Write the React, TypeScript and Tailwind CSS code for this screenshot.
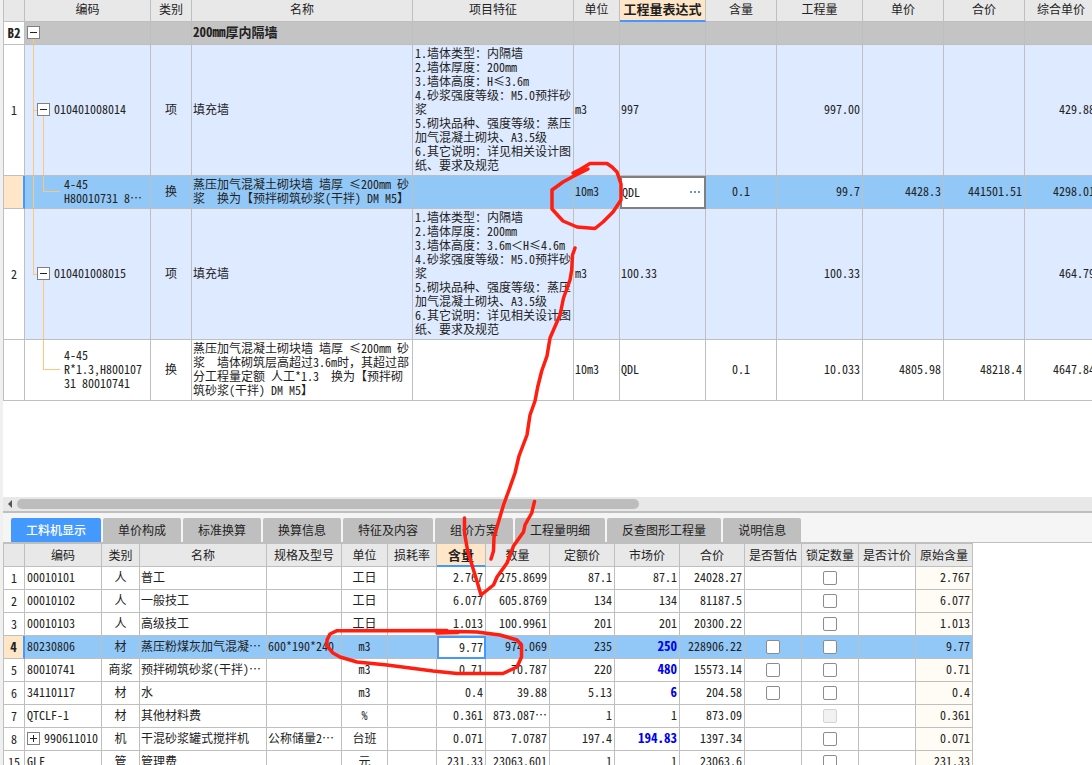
import type { ReactNode } from "react";

const line = "border-r border-b border-[#bfbfbf]";

function Wide({ text }: { text: string }) {
  return (
    <>
      {text.split(/([，＜…])/).map((part, i) =>
        i % 2 === 1 ? (
          <span key={i} lang="zh-CN" className="inline-block w-[12px] [font-feature-settings:normal]">
            {part === "…" ? "⋯" : part}
          </span>
        ) : (
          part
        ),
      )}
    </>
  );
}

function Toggle({ open, label }: { open: boolean; label: string }) {
  return (
    <button
      type="button"
      aria-label={label}
      aria-expanded={open}
      className="relative z-10 flex size-[13px] shrink-0 items-center justify-center border border-[#808080] bg-white"
    >
      <svg viewBox="0 0 7 7" className="size-[7px]" shapeRendering="crispEdges">
        <path d={open ? "M0 3h7v1H0z" : "M0 3h7v1H0zM3 0h1v7H3z"} fill="#222" />
      </svg>
    </button>
  );
}

type TopRow = {
  no: string;
  code: string;
  kind: string;
  name: string;
  spec: string;
  unit: string;
  expr: string;
  ratio: string;
  qty: string;
  price: string;
  total: string;
  composite: string;
  parent: boolean;
  trunk: "full" | "half" | "none";
  selected?: boolean;
};

const spec = (height: string) =>
  `1.墙体类型：内隔墙
2.墙体厚度：200mm
3.墙体高度：${height}
4.砂浆强度等级：M5.0预拌砂
浆
5.砌块品种、强度等级：蒸压
加气混凝土砌块、A3.5级
6.其它说明：详见相关设计图
纸、要求及规范`;

const topRows: TopRow[] = [
  {
    no: "1", code: "010401008014", kind: "项", name: "填充墙", spec: spec("H≤3.6m"), unit: "m3", expr: "997",
    ratio: "", qty: "997.00", price: "", total: "", composite: "429.88", parent: true, trunk: "full",
  },
  {
    no: "", code: "4-45\nH80010731 8…", kind: "换",
    name: "蒸压加气混凝土砌块墙 墙厚 ≤200mm 砂\n浆  换为【预拌砌筑砂浆(干拌) DM M5】",
    spec: "", unit: "10m3", expr: "QDL", ratio: "0.1", qty: "99.7", price: "4428.3", total: "441501.51",
    composite: "4298.01", parent: false, trunk: "full", selected: true,
  },
  {
    no: "2", code: "010401008015", kind: "项", name: "填充墙", spec: spec("3.6m＜H≤4.6m"), unit: "m3", expr: "100.33",
    ratio: "", qty: "100.33", price: "", total: "", composite: "464.79", parent: true, trunk: "half",
  },
  {
    no: "", code: "4-45\nR*1.3,H800107\n31 80010741", kind: "换",
    name: "蒸压加气混凝土砌块墙 墙厚 ≤200mm 砂\n浆  墙体砌筑层高超过3.6m时，其超过部\n分工程量定额 人工*1.3  换为【预拌砌\n筑砂浆(干拌) DM M5】",
    spec: "", unit: "10m3", expr: "QDL", ratio: "0.1", qty: "10.033", price: "4805.98", total: "48218.4",
    composite: "4647.84", parent: false, trunk: "none",
  },
];

const topHeads = ["", "编码", "类别", "名称", "项目特征", "单位", "工程量表达式", "含量", "工程量", "单价", "合价", "综合单价"];

function TreeCell({ row }: { row: TopRow }) {
  return (
    <td className={`relative ${line} p-0 pb-0.5`}>
      {row.trunk === "full" && <span className="absolute inset-y-0 left-2 w-px bg-[#ffc677]" />}
      {row.trunk === "half" && <span className="absolute top-0 left-2 h-1/2 w-px bg-[#ffc677]" />}
      {row.parent ? (
        <>
          <span className="absolute top-1/2 left-2 h-px w-1 bg-[#ffc677]" />
          <span className="absolute bottom-0 left-[18px] h-1/2 w-px bg-[#ffc677]" />
          <div className="flex items-center gap-1 pl-3">
            <Toggle open label={`折叠 ${row.code}`} />
            {row.code}
          </div>
        </>
      ) : (
        <>
          <span className="absolute top-0 left-[18px] h-1/2 w-[17px] border-b border-l border-[#ffc677]" />
          <div className="whitespace-pre pl-[39px]">
            <Wide text={row.code} />
          </div>
        </>
      )}
    </td>
  );
}

function TopTable() {
  return (
    <table className="w-[1094px] table-fixed border-separate border-spacing-0 border-l border-[#bfbfbf]">
      <colgroup>
        <col className="w-[21px]" />
        <col className="w-[126px]" />
        <col className="w-[41px]" />
        <col className="w-[221px]" />
        <col className="w-[161px]" />
        <col className="w-[46px]" />
        <col className="w-[86px]" />
        <col className="w-[71px]" />
        <col className="w-[86px]" />
        <col className="w-[81px]" />
        <col className="w-[81px]" />
        <col className="w-[73px]" />
      </colgroup>
      <thead>
        <tr className="h-[22px] bg-[#e8e8e8]">
          {topHeads.map((h) =>
            h === "工程量表达式" ? (
              <th key={h} className="border-r border-b-2 border-r-[#bfbfbf] border-b-[#4499ff] bg-[#ffe6c8] p-0 pb-[3px] text-[13px] leading-[14px] font-bold whitespace-nowrap">
                {h}
              </th>
            ) : (
              <th key={h} className={`${line} p-0 pb-1 font-normal`}>{h}</th>
            ),
          )}
        </tr>
      </thead>
      <tbody>
        <tr className="h-[23px] bg-[#c4c4c4] text-[13px] leading-[14px] font-bold">
          <td className={`${line} bg-white p-0 text-center`}>B2</td>
          <td className={`relative ${line} p-0 pb-0.5 pl-0.5`}>
            <span className="absolute bottom-0 left-2 h-1/2 w-px bg-[#ffc677]" />
            <Toggle open label="折叠 200mm厚内隔墙" />
          </td>
          <td className={line} />
          <td className={`${line} p-0 pb-0.5 pl-px`}>200mm厚内隔墙</td>
          {topHeads.slice(4).map((h) => (
            <td key={h} className={line} />
          ))}
        </tr>
        {topRows.map((r, i) => {
          const num = `${line} p-0 pr-0.5 pb-0.5 text-right`;
          return (
            <tr key={i} className={r.selected ? "bg-[#92c8f7]" : r.parent ? "bg-[#deeaff]" : "bg-white"}>
              <td
                className={
                  r.selected
                    ? "border-r-2 border-b border-r-[#4499ff] border-b-[#bfbfbf] bg-[#ffe6c8] p-0"
                    : `${line} bg-white p-0 text-center`
                }
              >
                {r.no}
              </td>
              <TreeCell row={r} />
              <td className={`${line} p-0 pb-0.5 text-center`}>{r.kind}</td>
              <td className={`${line} whitespace-pre p-0 pt-px pb-[3px] pl-px`}>
                <Wide text={r.name} />
              </td>
              <td className={`${line} whitespace-pre p-0 pt-px pb-[3px] pl-0.5`}>
                <Wide text={r.spec} />
              </td>
              <td className={`${line} p-0 pb-0.5 pl-px`}>{r.unit}</td>
              {r.selected ? (
                <td className="border-2 border-[#808080] bg-white p-0 pb-0.5">
                  <div className="flex items-center">
                    <input aria-label="工程量表达式" defaultValue={r.expr} className="h-[14px] w-0 flex-1 bg-transparent p-0 outline-none" />
                    <button type="button" aria-label="编辑表达式" className="flex gap-0.5 px-1">
                      <i className="size-0.5 bg-[#5b9bd5]" />
                      <i className="size-0.5 bg-[#5b9bd5]" />
                      <i className="size-0.5 bg-[#5b9bd5]" />
                    </button>
                  </div>
                </td>
              ) : (
                <td className={`${line} p-0 pb-0.5 pl-px`}>{r.expr}</td>
              )}
              <td className={`${line} p-0 pb-0.5 text-center`}>{r.ratio}</td>
              <td className={num}>{r.qty}</td>
              <td className={num}>{r.price}</td>
              <td className={num}>{r.total}</td>
              <td className={num}>{r.composite}</td>
            </tr>
          );
        })}
      </tbody>
    </table>
  );
}

const tabs = ["工料机显示", "单价构成", "标准换算", "换算信息", "特征及内容", "组价方案", "工程量明细", "反查图形工程量", "说明信息"];

const lowHeads = [
  "", "编码", "类别", "名称", "规格及型号", "单位", "损耗率", "含量", "数量", "定额价", "市场价", "合价",
  "是否暂估", "锁定数量", "是否计价", "原始含量",
];

type LowRow = {
  no: string;
  cells: [code: string, kind: string, name: string, model: string, unit: string];
  nums: [ratio: string, qty: string, base: string, market: string, total: string];
  origin: string;
  changed?: boolean;
  estimate?: boolean;
  locked?: boolean;
  group?: boolean;
  selected?: boolean;
};

const lowRows: LowRow[] = [
  { no: "1", cells: ["00010101", "人", "普工", "", "工日"], nums: ["2.767", "275.8699", "87.1", "87.1", "24028.27"], origin: "2.767" },
  { no: "2", cells: ["00010102", "人", "一般技工", "", "工日"], nums: ["6.077", "605.8769", "134", "134", "81187.5"], origin: "6.077" },
  { no: "3", cells: ["00010103", "人", "高级技工", "", "工日"], nums: ["1.013", "100.9961", "201", "201", "20300.22"], origin: "1.013" },
  { no: "4", cells: ["80230806", "材", "蒸压粉煤灰加气混凝…", "600*190*240", "m3"], nums: ["9.77", "974.069", "235", "250", "228906.22"], origin: "9.77", changed: true, estimate: true, selected: true },
  { no: "5", cells: ["80010741", "商浆", "预拌砌筑砂浆(干拌)…", "", "m3"], nums: ["0.71", "70.787", "220", "480", "15573.14"], origin: "0.71", changed: true, estimate: true },
  { no: "6", cells: ["34110117", "材", "水", "", "m3"], nums: ["0.4", "39.88", "5.13", "6", "204.58"], origin: "0.4", changed: true, estimate: true },
  { no: "7", cells: ["QTCLF-1", "材", "其他材料费", "", "%"], nums: ["0.361", "873.087…", "1", "1", "873.09"], origin: "0.361", locked: true },
  { no: "8", cells: ["990611010", "机", "干混砂浆罐式搅拌机", "公称储量2…", "台班"], nums: ["0.071", "7.0787", "197.4", "194.83", "1397.34"], origin: "0.071", changed: true, group: true },
  { no: "15", cells: ["GLF", "管", "管理费", "", "元"], nums: ["231.33", "23063.601", "1", "1", "23063.6"], origin: "231.33" },
];

function Check({ label, disabled }: { label: string; disabled?: boolean }) {
  return (
    <input
      type="checkbox"
      aria-label={label}
      disabled={disabled}
      className="mx-auto mt-0.5 block size-[14px] appearance-none rounded-xs border border-[#8c8c8c] bg-white checked:bg-[#4499ff] disabled:border-[#d4d4d4] disabled:bg-[#f2f2f2]"
    />
  );
}

function Cell({ children, className }: { children?: ReactNode; className: string }) {
  return <td className={`${line} ${className} overflow-hidden whitespace-nowrap pt-0 pb-0.5`}>{children}</td>;
}

function LowTable() {
  return (
    <table className="w-[970px] table-fixed border-separate border-spacing-0 border-t border-l border-[#bfbfbf]">
      <colgroup>
        <col className="w-[21px]" />
        <col className="w-[77px]" />
        <col className="w-[38px]" />
        <col className="w-[127px]" />
        <col className="w-[75px]" />
        <col className="w-[46px]" />
        <col className="w-[49px]" />
        <col className="w-[49px]" />
        <col className="w-[64px]" />
        <col className="w-[65px]" />
        <col className="w-[65px]" />
        <col className="w-[65px]" />
        <col className="w-[57px]" />
        <col className="w-[57px]" />
        <col className="w-[57px]" />
        <col className="w-[57px]" />
      </colgroup>
      <thead>
        <tr className="h-[23px] bg-[#e8e8e8]">
          {lowHeads.map((h) =>
            h === "含量" ? (
              <th key={h} className="border-r border-b-2 border-r-[#bfbfbf] border-b-[#4499ff] bg-[#ffe6c8] p-0 text-[13px] leading-[14px] font-bold">
                {h}
              </th>
            ) : (
              <th key={h} className={`${line} whitespace-nowrap p-0 font-normal`}>{h}</th>
            ),
          )}
        </tr>
      </thead>
      <tbody>
        {lowRows.map((r) => {
          const [code, kind, name, model, unit] = r.cells;
          const [ratio, qty, base, market, total] = r.nums;
          return (
            <tr key={r.no} className={r.selected ? "h-[23px] bg-[#92c8f7]" : "h-[23px] bg-white"}>
              <td
                className={
                  r.selected
                    ? "border-r-2 border-b border-r-[#4499ff] border-b-[#bfbfbf] bg-[#ffe6c8] p-0 text-center text-[13px] leading-[14px] font-bold"
                    : `${line} p-0 text-center`
                }
              >
                {r.no}
              </td>
              <Cell className="pl-0.5 pr-0">
                <div className="flex items-center gap-1">
                  {r.group && <Toggle open={false} label={`展开 ${code}`} />}
                  {code}
                </div>
              </Cell>
              <Cell className="px-0 text-center">{kind}</Cell>
              <Cell className="pl-px pr-0">
                <Wide text={name} />
              </Cell>
              <Cell className="pl-px pr-0">
                <Wide text={model} />
              </Cell>
              <Cell className="px-0 text-center">{unit}</Cell>
              <Cell className="px-0" />
              {r.selected ? (
                <td className="border-2 border-[#4499ff] bg-white p-0 pb-0.5">
                  <input aria-label="含量" defaultValue={ratio} className="block h-[14px] w-full bg-transparent p-0 pr-px text-right outline-none" />
                </td>
              ) : (
                <Cell className="pl-0 pr-0.5 text-right">{ratio}</Cell>
              )}
              <Cell className="pl-0 pr-0.5 text-right">
                <Wide text={qty} />
              </Cell>
              <Cell className="pl-0 pr-0.5 text-right">{base}</Cell>
              <Cell
                className={
                  r.changed
                    ? "pl-0 pr-0.5 text-right text-[13px] leading-[14px] font-bold text-[#0000ee]"
                    : "pl-0 pr-0.5 text-right"
                }
              >
                {market}
              </Cell>
              <Cell className="pl-0 pr-0.5 text-right">{total}</Cell>
              <Cell className="px-0">{r.estimate && <Check label={`是否暂估 ${code}`} />}</Cell>
              <Cell className="px-0">
                <Check label={`锁定数量 ${code}`} disabled={r.locked} />
              </Cell>
              <Cell className="px-0" />
              <Cell className={r.selected ? "pl-0 pr-0.5 text-right" : "bg-[#fffbf5] pl-0 pr-0.5 text-right"}>{r.origin}</Cell>
            </tr>
          );
        })}
      </tbody>
    </table>
  );
}

const strokes = [
  "M573 173L580 169.500L590 163.500H607L612 167L617 172L621 184V200L613 212L603 222L595 228.500L577 227L563 221L552 209V190L563 182L573 176.500L588 169",
  "M575 248L572.500 255L571.700 270L570 280L563.500 298L560 315L550 338L547 356L541.700 371L537.700 387L535 401L530 415L527 435L519 456L515 473L509 490L503.500 505L494 537L493.500 551L491 559",
  "M464.500 518V533L467.700 551L473.500 570L477.500 583L481 595L493.500 585L497 577L507 563L513.500 546L523.500 532L525 525L531.700 513L534.500 501.500",
  "M437 633L458 632.500M447 630.500L337 630.700L330 634L327 640V646L333 653L340 657L357 662L387 665L433 671L457 673.500H503L517 667L521.500 657V645L517 640L500 635L477 632L437 631",
];

export default function App() {
  return (
    <main className="relative flex h-screen flex-col overflow-hidden bg-[#f0f0f0] pl-[3px] font-['Noto_Sans_CJK_SC',sans-serif] text-[12px] leading-[14px] text-[#222] [font-feature-settings:'hwid']">
      <section className="min-h-0 flex-1 overflow-hidden bg-white">
        <TopTable />
      </section>
      <div className="flex h-[14px] shrink-0 items-center gap-[5px] bg-[#e8e8e8] pl-[5px]">
        <svg viewBox="0 0 4 8" className="h-2 w-1">
          <path d="M4 0v8L0 4z" fill="#555" />
        </svg>
        <div className="h-[10px] w-[622px] rounded-full bg-[#bdbdbd]" />
      </div>
      <nav role="tablist" className="flex h-8 shrink-0 items-end gap-0.5 border-t-2 border-b border-[#bfbfbf] bg-[#f5f5f5] pl-2">
        {tabs.map((t, i) => (
          <button
            key={t}
            type="button"
            role="tab"
            aria-selected={i === 0}
            className={
              i === 0
                ? "h-6 whitespace-nowrap rounded-t-xs bg-[#4499ff] px-[15px] font-medium text-white"
                : "h-6 whitespace-nowrap rounded-t-xs bg-[#bfbfbf] px-[15px]"
            }
          >
            {t}
          </button>
        ))}
      </nav>
      <section className="h-[222px] shrink-0 overflow-hidden bg-white">
        <LowTable />
      </section>
      <svg
        viewBox="0 0 1092 765"
        className="pointer-events-none absolute top-0 left-0 z-20 h-[765px] w-[1092px]"
        fill="none"
        stroke="#ff1e10"
        strokeWidth="3.5"
        strokeLinecap="round"
        strokeLinejoin="round"
      >
        {strokes.map((d) => (
          <path key={d} d={d} />
        ))}
      </svg>
    </main>
  );
}
